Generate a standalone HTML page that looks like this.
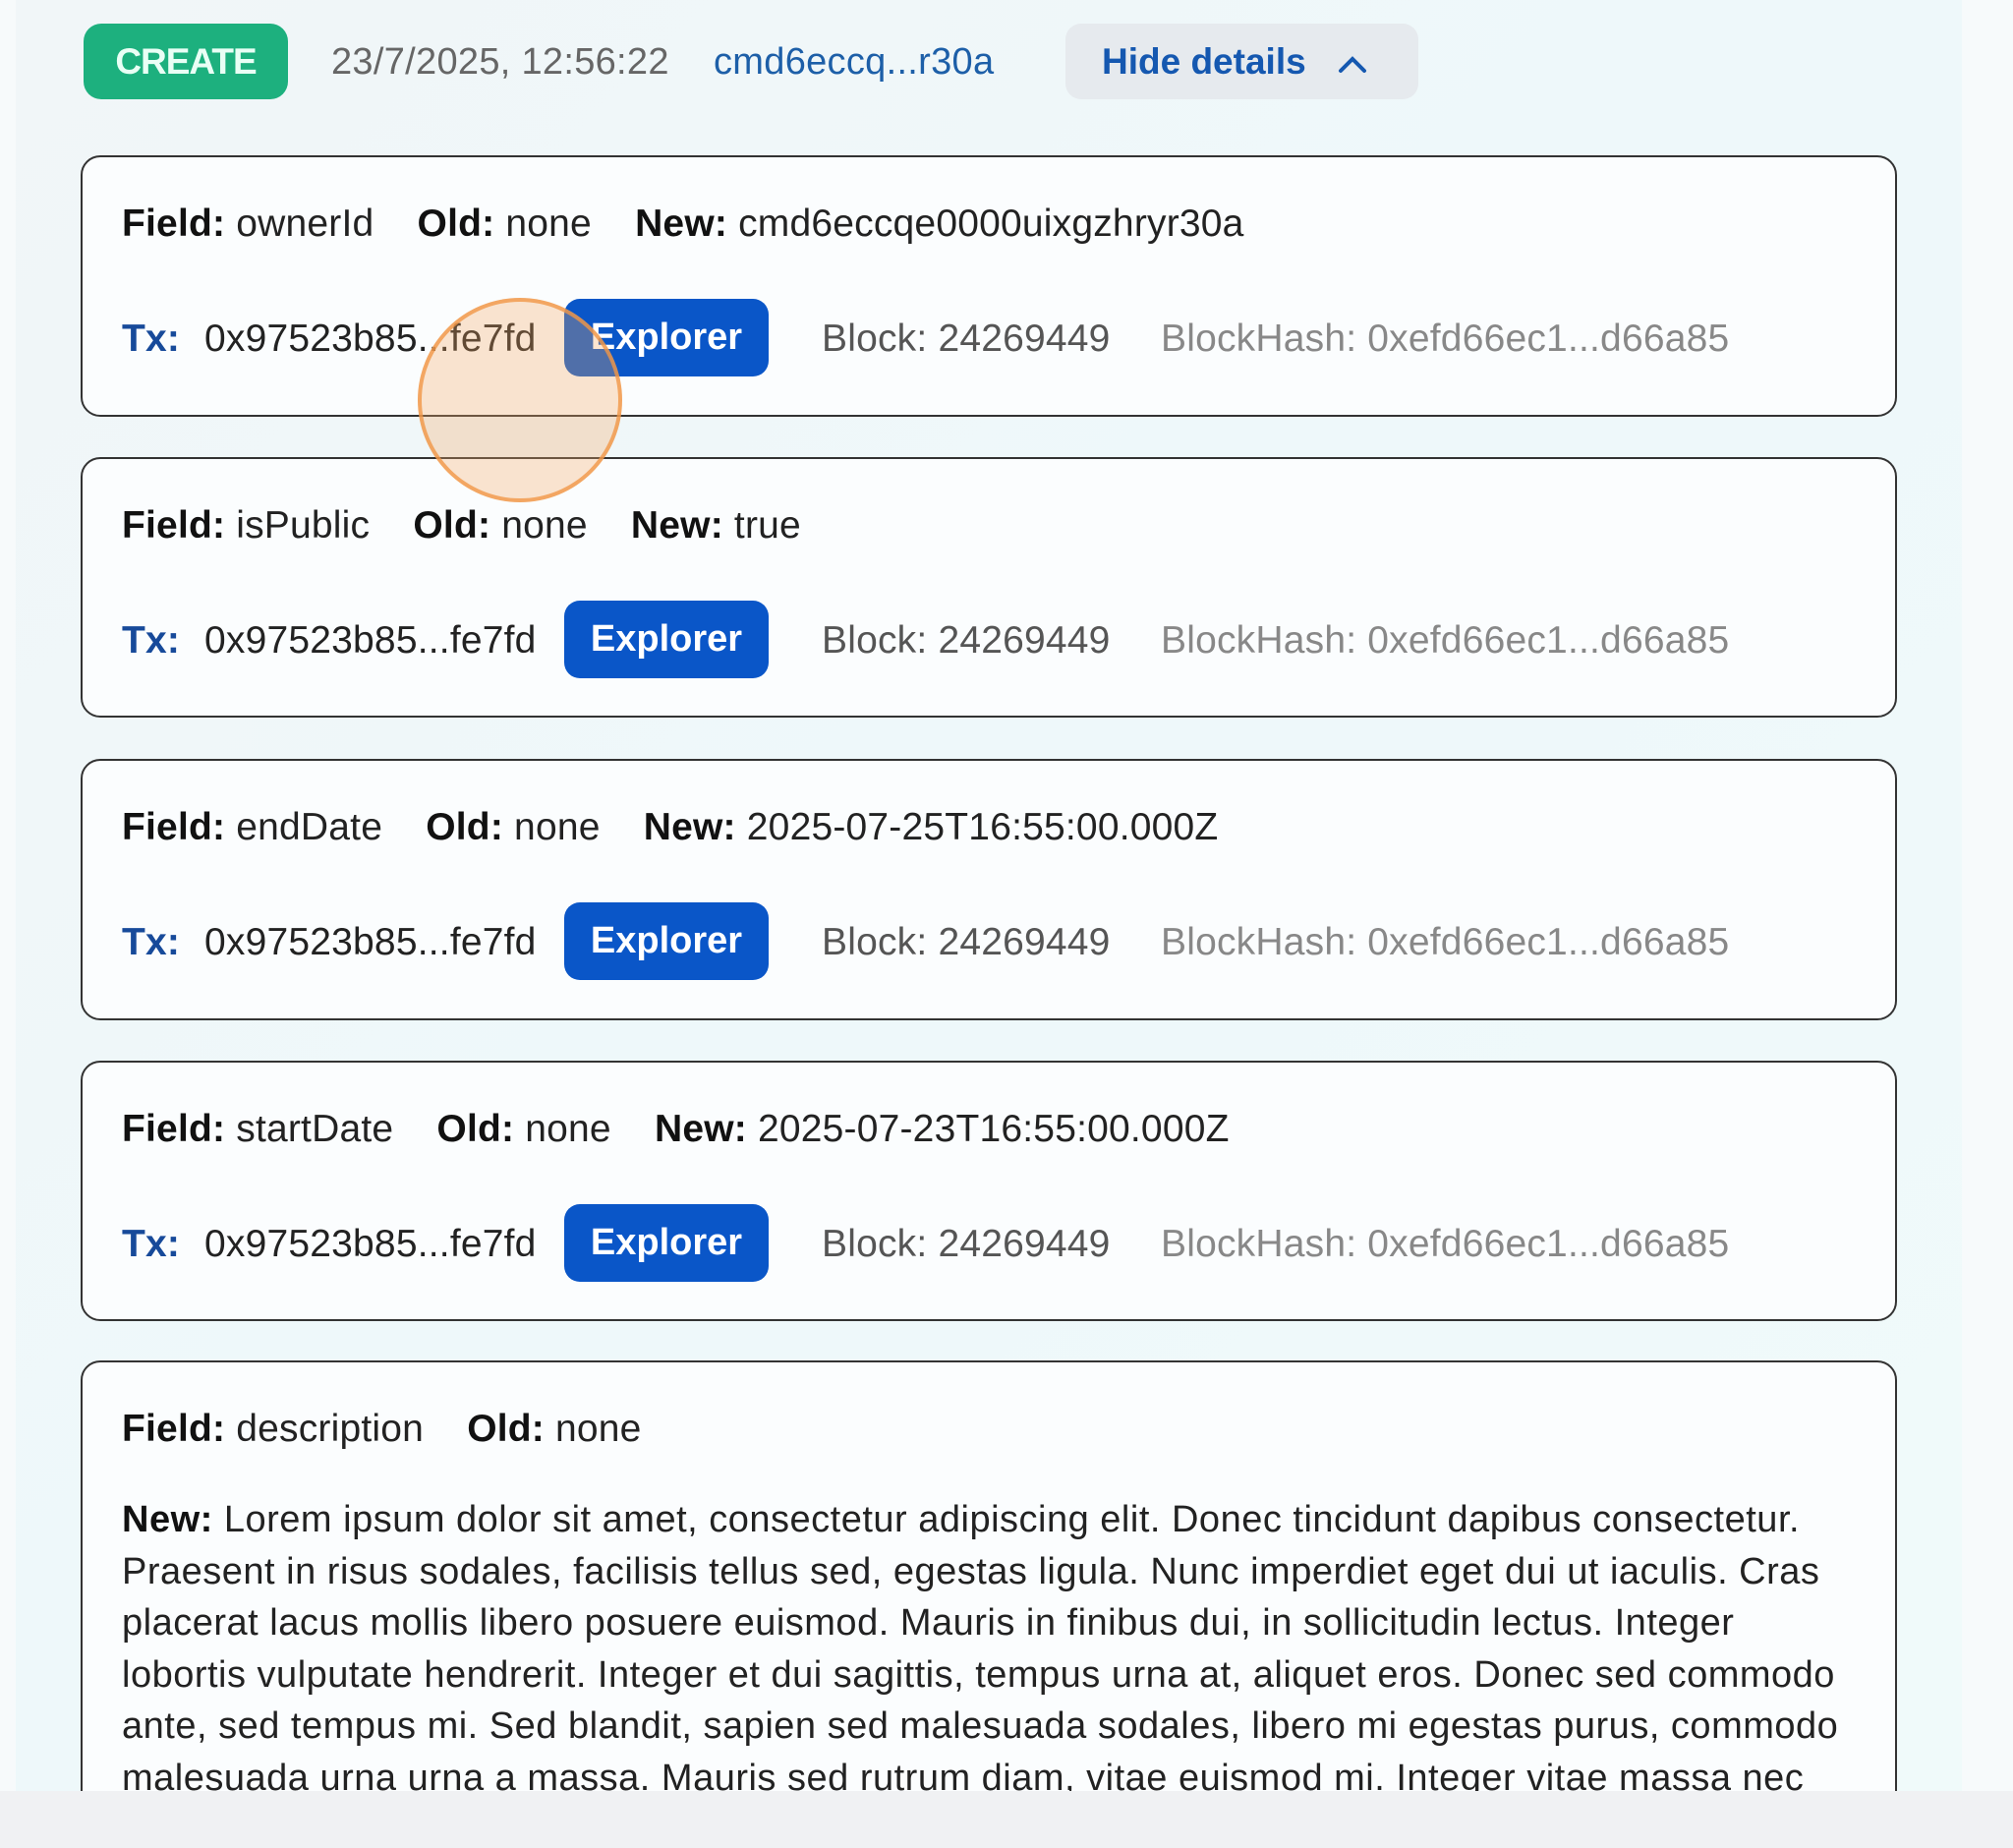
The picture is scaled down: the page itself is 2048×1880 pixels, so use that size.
<!DOCTYPE html>
<html><head><meta charset="utf-8"><style>
*{box-sizing:border-box;margin:0;padding:0}
html,body{width:2048px;height:1880px;overflow:hidden}
body{background:#f7fafb;font-family:"Liberation Sans",sans-serif;position:relative;color:#222}
.panel{position:absolute;left:16px;top:0;width:1980px;height:1822px;background:linear-gradient(135deg,#f1f6f8 0%,#eef8fa 50%,#f0fafa 100%)}
.bottom{position:absolute;left:0;top:1822px;width:2048px;height:58px;background:#f0f1f3}
.badge{position:absolute;left:85px;top:24px;width:208px;height:77px;background:#1db07e;border-radius:18px;color:#e9fff5;font-weight:bold;font-size:37px;line-height:77px;text-align:center;letter-spacing:-1px}
.t{position:absolute;font-size:38px;white-space:nowrap;line-height:1;letter-spacing:0.3px}
.hide{position:absolute;left:1084px;top:24px;width:359px;height:77px;background:#e6eaee;border-radius:16px;color:#1558b0;font-weight:bold;font-size:37px;line-height:77px;padding-left:37px}
.card{position:absolute;left:82px;width:1848px;border:2.5px solid #333;border-radius:20px;background:#fbfdfe}
.row{position:absolute;font-size:39px;white-space:nowrap;line-height:1;letter-spacing:0.2px}
b{font-weight:bold;color:#111}
.tx{color:#174a9a;font-weight:bold}
.h{position:absolute;left:84px;top:0}
.exp{position:absolute;left:490px;width:208px;height:79px;background:#0a56c8;border-radius:16px;color:#fff;font-weight:bold;font-size:38px;line-height:79px;text-align:center}
.gray{color:#555}
.lgray{color:#888}
.para{position:absolute;left:40px;top:134px;font-size:38px;line-height:52.5px;white-space:nowrap;letter-spacing:0.5px;color:#222}
</style></head><body>
<div class="panel"></div>
<div class="badge">CREATE</div>
<div class="t" style="left:337px;top:44px;color:#666">23/7/2025, 12:56:22</div>
<div class="t" style="left:726px;top:44px;color:#1d5fa8">cmd6eccq...r30a</div>
<div class="hide">Hide details <svg width="34" height="24" viewBox="0 0 34 24" style="margin-left:20px;vertical-align:-2px"><path d="M5 19 L17 7 L29 19" stroke="#1558b0" stroke-width="4" fill="none" stroke-linecap="round"/></svg></div>

<div class="card" style="top:158px;height:266px">
<div class="row" style="left:40px;top:48px"><b>Field:</b> ownerId&nbsp;&nbsp;&nbsp; <b>Old:</b> none&nbsp;&nbsp;&nbsp; <b>New:</b> cmd6eccqe0000uixgzhryr30a</div>
<div class="row" style="left:40px;top:165px"><span class="tx">Tx:</span><span class="h">0x97523b85...fe7fd</span></div>
<div class="exp" style="top:144px">Explorer</div>
<div class="row gray" style="left:752px;top:165px">Block: 24269449</div>
<div class="row lgray" style="left:1097px;top:165px">BlockHash: 0xefd66ec1...d66a85</div>
</div>
<div class="card" style="top:465px;height:265px">
<div class="row" style="left:40px;top:48px"><b>Field:</b> isPublic&nbsp;&nbsp;&nbsp; <b>Old:</b> none&nbsp;&nbsp;&nbsp; <b>New:</b> true</div>
<div class="row" style="left:40px;top:165px"><span class="tx">Tx:</span><span class="h">0x97523b85...fe7fd</span></div>
<div class="exp" style="top:144px">Explorer</div>
<div class="row gray" style="left:752px;top:165px">Block: 24269449</div>
<div class="row lgray" style="left:1097px;top:165px">BlockHash: 0xefd66ec1...d66a85</div>
</div>
<div class="card" style="top:772px;height:266px">
<div class="row" style="left:40px;top:48px"><b>Field:</b> endDate&nbsp;&nbsp;&nbsp; <b>Old:</b> none&nbsp;&nbsp;&nbsp; <b>New:</b> 2025-07-25T16:55:00.000Z</div>
<div class="row" style="left:40px;top:165px"><span class="tx">Tx:</span><span class="h">0x97523b85...fe7fd</span></div>
<div class="exp" style="top:144px">Explorer</div>
<div class="row gray" style="left:752px;top:165px">Block: 24269449</div>
<div class="row lgray" style="left:1097px;top:165px">BlockHash: 0xefd66ec1...d66a85</div>
</div>
<div class="card" style="top:1079px;height:265px">
<div class="row" style="left:40px;top:48px"><b>Field:</b> startDate&nbsp;&nbsp;&nbsp; <b>Old:</b> none&nbsp;&nbsp;&nbsp; <b>New:</b> 2025-07-23T16:55:00.000Z</div>
<div class="row" style="left:40px;top:165px"><span class="tx">Tx:</span><span class="h">0x97523b85...fe7fd</span></div>
<div class="exp" style="top:144px">Explorer</div>
<div class="row gray" style="left:752px;top:165px">Block: 24269449</div>
<div class="row lgray" style="left:1097px;top:165px">BlockHash: 0xefd66ec1...d66a85</div>
</div>
<div class="card" style="top:1384px;height:480px;overflow:hidden">
<div class="row" style="left:40px;top:48px"><b>Field:</b> description&nbsp;&nbsp;&nbsp; <b>Old:</b> none</div>
<div class="para"><b>New:</b> Lorem ipsum dolor sit amet, consectetur adipiscing elit. Donec tincidunt dapibus consectetur.<br>Praesent in risus sodales, facilisis tellus sed, egestas ligula. Nunc imperdiet eget dui ut iaculis. Cras<br>placerat lacus mollis libero posuere euismod. Mauris in finibus dui, in sollicitudin lectus. Integer<br>lobortis vulputate hendrerit. Integer et dui sagittis, tempus urna at, aliquet eros. Donec sed commodo<br>ante, sed tempus mi. Sed blandit, sapien sed malesuada sodales, libero mi egestas purus, commodo<br>malesuada urna urna a massa. Mauris sed rutrum diam, vitae euismod mi. Integer vitae massa nec</div>
</div>
<div style="position:absolute;left:425px;top:303px;width:208px;height:208px;border-radius:50%;background:rgba(245,170,100,0.3);border:4px solid rgba(240,150,70,0.8)"></div>
<div class="bottom"></div>
</body></html>
